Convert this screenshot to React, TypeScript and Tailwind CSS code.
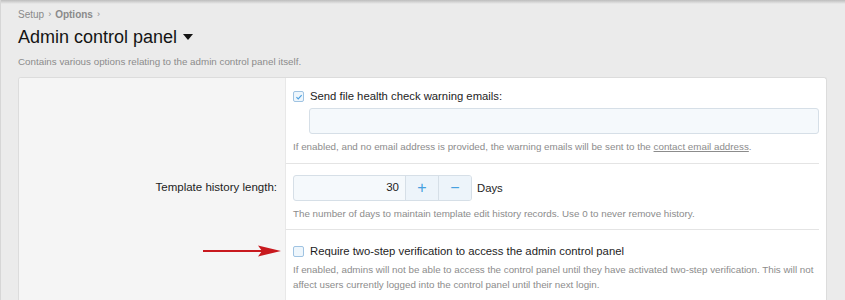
import React from "react";

const font = { fontFamily: '"Liberation Sans", Arial, sans-serif' };

function CheckBox({ checked = false }: { checked?: boolean }) {
  return (
    <span className="inline-flex h-[11px] w-[11px] shrink-0 items-center justify-center rounded-[2px] border border-[#9fc3e2] bg-[#eef6fc]">
      {checked && (
        <svg viewBox="0 0 10 10" className="h-[8px] w-[8px]">
          <path d="M1.8 5.2 L4 7.3 L8.3 2.6" fill="none" stroke="#4a9fe0" strokeWidth="1.4" />
        </svg>
      )}
    </span>
  );
}

function RedArrow() {
  return (
    <svg width="78" height="12" viewBox="0 0 78 12" className="absolute left-[-90px] top-[0px]">
      <line x1="0" y1="6" x2="64" y2="6" stroke="#c8191e" strokeWidth="2" />
      <path d="M55 0.5 L78 6 L55 11.5 L59 6 Z" fill="#c8191e" />
    </svg>
  );
}

export default function App() {
  return (
    <div className="h-[300px] w-[845px] overflow-hidden bg-[#ebebeb] border-l border-[#d6d6d6]" style={font}>
      <div className="h-[4px] bg-gradient-to-b from-[#bdbdbd] to-[#ebebeb]" />
      <div className="pl-[17px] pr-[18px]">
        <div className="mt-[3px] flex items-center gap-[4px] text-[10px] text-[#8a8a8a]">
          <span>Setup</span>
          <span className="text-[9px]">›</span>
          <span className="font-bold">Options</span>
          <span className="text-[9px]">›</span>
        </div>
        <h1 className="mt-[3px] flex items-center gap-[6px] text-[18px] leading-[24px] text-[#141414]">
          Admin control panel
          <svg width="10" height="6" viewBox="0 0 10 6">
            <path d="M0 0 L10 0 L5 6 Z" fill="#141414" />
          </svg>
        </h1>
        <p className="mt-[5px] text-[9.8px] leading-[15px] text-[#8c8c8c]">
          Contains various options relating to the admin control panel itself.
        </p>

        <div className="mt-[8px] flex rounded-t-[3px] border border-b-0 border-[#dcdcdc] bg-white">
          <div className="w-[267px] shrink-0 rounded-tl-[3px] bg-[#f5f5f5] border-r border-[#e8e8e8]">
            <div className="h-[86px]" />
            <div className="flex h-[66px] items-start justify-end pr-[8px] pt-[15px] text-[11.5px] text-[#1d1d1d]">
              Template history length:
            </div>
            <div className="h-[80px]" />
          </div>

          <div className="min-w-0 flex-1">
            <div className="mr-[7px] h-[86px] border-b border-[#e4e4e4] pl-[7px] pt-[12px]">
              <label className="flex items-center gap-[6px] text-[11.3px] leading-[13px] text-[#1d1d1d]">
                <CheckBox checked />
                Send file health check warning emails:
              </label>
              <div className="ml-[16px] mt-[5px] h-[26px] rounded-[3px] border border-[#d6dfe7] bg-[#f5f9fc]" />
              <p className="mt-[5px] text-[9.8px] leading-[15px] text-[#8c8c8c]">
                If enabled, and no email address is provided, the warning emails will be sent to the{" "}
                <span className="underline">contact email address</span>.
              </p>
            </div>

            <div className="mr-[7px] h-[66px] border-b border-[#e4e4e4] pl-[7px] pt-[11px]">
              <div className="flex items-center gap-[5px]">
                <div className="flex h-[26px] overflow-hidden rounded-[3px] border border-[#d6dfe7] bg-[#f5f9fc] text-[11.5px]">
                  <div className="flex w-[111px] items-center justify-end pr-[6px] text-[#1d1d1d]">30</div>
                  <div className="flex w-[33px] items-center justify-center border-l border-[#d6dfe7] bg-[#edf4fa] text-[16px] text-[#47a0e0]">+</div>
                  <div className="flex w-[33px] items-center justify-center border-l border-[#d6dfe7] bg-[#edf4fa] text-[16px] text-[#47a0e0]">−</div>
                </div>
                <span className="text-[11.3px] text-[#1d1d1d]">Days</span>
              </div>
              <p className="mt-[5px] text-[9.8px] leading-[15px] text-[#8c8c8c]">
                The number of days to maintain template edit history records. Use 0 to never remove history.
              </p>
            </div>

            <div className="mr-[7px] pl-[7px] pt-[15px]">
              <label className="relative flex items-center gap-[6px] text-[11.3px] leading-[13px] text-[#1d1d1d]">
                <RedArrow />
                <CheckBox />
                Require two-step verification to access the admin control panel
              </label>
              <p className="mt-[4px] whitespace-nowrap text-[9.8px] leading-[15px] text-[#8c8c8c]">
                If enabled, admins will not be able to access the control panel until they have activated two-step verification. This will not
                <br />
                affect users currently logged into the control panel until their next login.
              </p>
            </div>
          </div>
        </div>
      </div>
    </div>
  );
}
